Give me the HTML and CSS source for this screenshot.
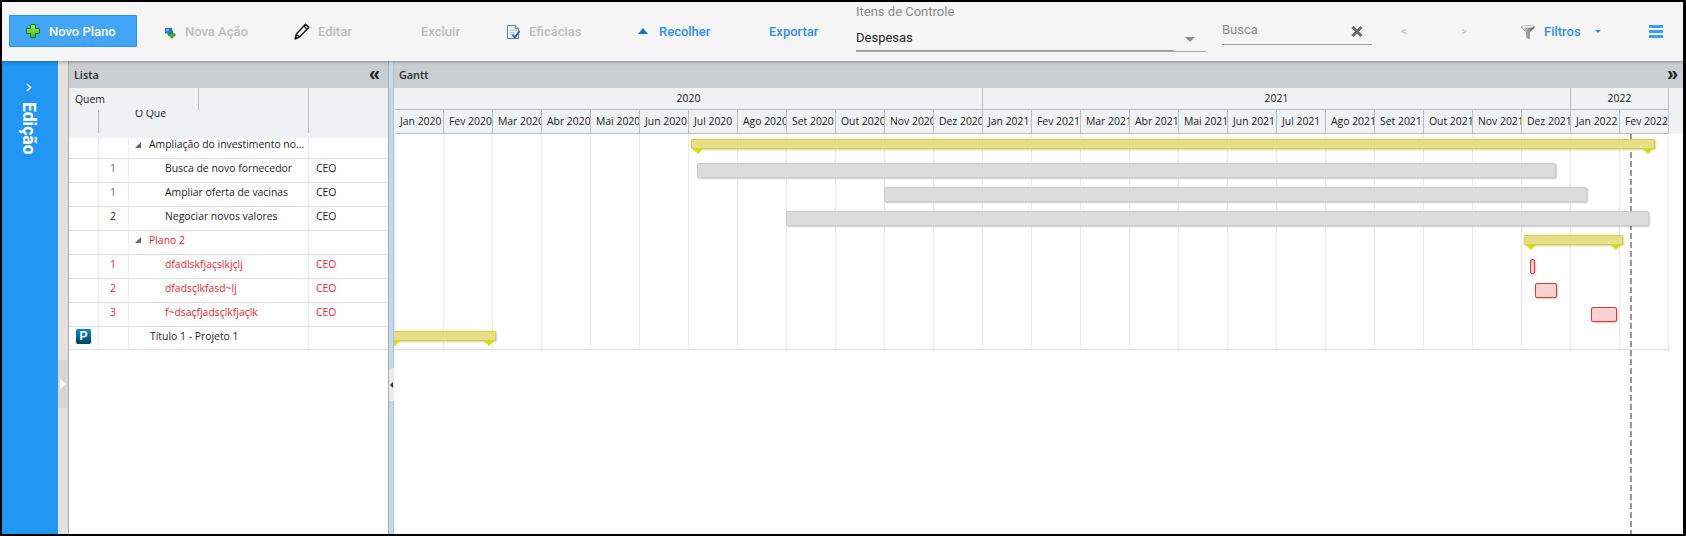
FILE: index.html
```html
<!DOCTYPE html>
<html lang="pt">
<head>
<meta charset="utf-8">
<title>Gantt</title>
<link rel="stylesheet" href="styles.css">
</head>
<body>
<div class="frame">
  <header class="toolbar">
    <button class="primary"><svg class="ic-plus" viewBox="0 0 14 14"><defs><linearGradient id="gp" x1="0" y1="0" x2="0" y2="1"><stop offset="0" stop-color="#a6e86a"/><stop offset="1" stop-color="#3fb52e"/></linearGradient></defs><path d="M4.5.5h5v4h4v5h-4v4h-5v-4h-4v-5h4z" fill="url(#gp)" stroke="#0b7d12"/></svg>Novo Plano</button>
    <div class="tool w-nova muted"><svg class="ic-nova" viewBox="0 0 12 11"><rect x="0" y="0" width="8" height="6" fill="#2f6fd6"/><rect x="1" y="1.500" width="3" height="2" fill="#a8c8f2"/><rect x="2.500" y="3" width="6" height="4" fill="#3a7be0"/><path d="M6.500 4.500h2v2h2.500v2h-2.500v2.500h-2v-2.500h-2.500v-2h2.500z" fill="#46c83a" stroke="#0a6d12" stroke-width=".8"/></svg>Nova Ação</div>
    <div class="tool w-editar muted"><svg class="ic-pencil" viewBox="0 0 16 17"><path d="M11.500 1.200l3.300 3.100-9.300 9.600-4.300 2.100 1-4.700z" fill="#fff" stroke="#1a1a1a" stroke-width="1.500" stroke-linejoin="round"/><path d="M9.800 3l3.300 3.200M2.300 11.300l3.200 2.600" fill="none" stroke="#1a1a1a" stroke-width="1.300"/><path d="M1.200 16l.6-3 2.300 2z" fill="#1a1a1a"/></svg>Editar</div>
    <div class="tool w-excluir muted">Excluir</div>
    <div class="tool w-efic muted"><svg class="ic-doc" viewBox="0 0 13 14"><path d="M.5.500h8l3 3v10h-11z" fill="#f4f6fa" stroke="#6d7c99"/><path d="M8.500.500v3h3" fill="#d9e0ec" stroke="#6d7c99"/><path d="M2.500 5.500h7M2.500 7.500h5M2.500 9.500h3" stroke="#b0bccf"/><path d="M5.500 9.500l2.300 3 4.700-6.500" fill="none" stroke="#1f62c4" stroke-width="2"/></svg>Eficácias</div>
    <div class="tool w-recolher link"><span class="tri-up"></span>Recolher</div>
    <div class="tool w-exportar link">Exportar</div>
    <div class="control">
      <div class="control-label">Itens de Controle</div>
      <div class="control-value"><span>Despesas</span><span class="caret-gray"></span></div>
      <div class="control-line"></div>
    </div>
    <div class="search"><span>Busca</span><svg class="ic-x" viewBox="0 0 12 11"><path d="M1.500 1l9 9M10.500 1l-9 9" stroke="#6b6b6b" stroke-width="3"/></svg></div>
    <div class="nav">&lt;</div>
    <div class="nav">&gt;</div>
    <div class="tool w-filtros link"><svg class="ic-funnel" viewBox="0 0 14 14"><defs><linearGradient id="gf" x1="0" y1="0" x2="1" y2="0"><stop offset="0" stop-color="#e8e8e8"/><stop offset=".5" stop-color="#a0a0a0"/><stop offset="1" stop-color="#4a4a4a"/></linearGradient></defs><path d="M.5 1.500q6.500-2 13 0l-.5 1.500-4.500 4.500v6l-3-.8v-5.200l-4.500-4.500z" fill="url(#gf)" stroke="#777" stroke-width=".5"/><ellipse cx="7" cy="1.800" rx="5.500" ry="1" fill="#f2f2f2"/></svg>Filtros<span class="caret-blue"></span></div>
    <div class="burger"><span></span><span></span><span></span></div>
  </header>

  <main class="workspace">
    <aside class="sidebar">
      <svg class="ic-chev" viewBox="0 0 6 9"><path d="M1 1l3.500 3.500-3.500 3.500" fill="none" stroke="#fff" stroke-width="1.500"/></svg>
      <div class="sidebar-title">Edição</div>
    </aside>
    <div class="strip"><div class="strip-handle"><span class="tri-white"></span></div></div>

    <section class="list">
      <div class="panel-title"><span>Lista</span><span class="dbl">«</span></div>
      <div class="list-head">
        <div class="lh-row1"><div class="lh-cell lh-quem">Quem</div><div class="lh-cell"></div></div>
        <div class="lh-row2"><div class="lh-cell"></div><div class="lh-cell lh-oque">O Que</div></div>
      </div>
      <div class="row first"><div class="c"></div><div class="c"></div><div class="c name"><span class="tree"></span>Ampliação do investimento no...</div><div class="c"></div></div>
      <div class="row"><div class="c"></div><div class="c num one">1</div><div class="c task">Busca de novo fornecedor</div><div class="c who">CEO</div></div>
      <div class="row"><div class="c"></div><div class="c num one">1</div><div class="c task">Ampliar oferta de vacinas</div><div class="c who">CEO</div></div>
      <div class="row"><div class="c"></div><div class="c num">2</div><div class="c task">Negociar novos valores</div><div class="c who">CEO</div></div>
      <div class="row red"><div class="c"></div><div class="c"></div><div class="c name"><span class="tree"></span>Plano 2</div><div class="c"></div></div>
      <div class="row red"><div class="c"></div><div class="c num">1</div><div class="c task">dfadlskfjaçslkjçlj</div><div class="c who">CEO</div></div>
      <div class="row red"><div class="c"></div><div class="c num">2</div><div class="c task">dfadsçlkfasd~lj</div><div class="c who">CEO</div></div>
      <div class="row red"><div class="c"></div><div class="c num">3</div><div class="c task">f~dsaçfjadsçlkfjaçlk</div><div class="c who">CEO</div></div>
      <div class="row last"><div class="c"><span class="badge">P</span></div><div class="c"></div><div class="c name plain">Título 1 - Projeto 1</div><div class="c"></div></div>
    </section>

    <div class="splitter"><div class="split-handle"><span class="tri-dark"></span></div></div>

    <section class="gantt">
      <div class="panel-title gantt-title"><span>Gantt</span><span class="dbl">»</span></div>
      <div class="gantt-head">
        <div class="years"><div>2020</div><div>2021</div><div>2022</div></div>
        <div class="months">
          <div>Jan 2020</div><div>Fev 2020</div><div>Mar 2020</div><div>Abr 2020</div><div>Mai 2020</div><div>Jun 2020</div><div>Jul 2020</div><div>Ago 2020</div><div>Set 2020</div><div>Out 2020</div><div>Nov 2020</div><div>Dez 2020</div>
          <div>Jan 2021</div><div>Fev 2021</div><div>Mar 2021</div><div>Abr 2021</div><div>Mai 2021</div><div>Jun 2021</div><div>Jul 2021</div><div>Ago 2021</div><div>Set 2021</div><div>Out 2021</div><div>Nov 2021</div><div>Dez 2021</div>
          <div>Jan 2022</div><div>Fev 2022</div>
        </div>
      </div>
      <div class="gantt-body">
        <div class="today"></div>
        <div class="timeline">
          <div class="g-row"><div class="bar plan" style="margin-left:297px;width:964px"></div></div>
          <div class="g-row"><div class="bar task-bar" style="margin-left:303px;width:859px"></div></div>
          <div class="g-row"><div class="bar task-bar" style="margin-left:490px;width:703px"></div></div>
          <div class="g-row"><div class="bar task-bar" style="margin-left:392px;width:863px"></div></div>
          <div class="g-row"><div class="bar plan" style="margin-left:1130px;width:99px"></div></div>
          <div class="g-row"><div class="bar late" style="margin-left:1136px;width:5px"></div></div>
          <div class="g-row"><div class="bar late" style="margin-left:1141px;width:22px"></div></div>
          <div class="g-row"><div class="bar late" style="margin-left:1197px;width:26px"></div></div>
          <div class="g-row"><div class="bar plan" style="margin-left:-6px;width:108px"></div></div>
        </div>
      </div>
    </section>
  </main>
</div>
</body>
</html>
```

FILE: styles.css
```css
* { box-sizing: border-box; }
html, body { margin: 0; height: 100%; background: #000; }
body { overflow: hidden; }

.frame {
  margin: 2px 3px 0 2px;
  height: 532px;
  display: flex;
  flex-direction: column;
  background: #fff;
  overflow: hidden;
}

/* Toolbar */
.toolbar {
  height: 59px;
  flex: none;
  display: flex;
  align-items: center;
  padding-left: 7px;
  background: #f5f5f5;
  font: 500 13px Roboto, sans-serif;
  position: relative;
  z-index: 5;
  box-shadow: 0 1px 3px rgba(0, 0, 0, .35);
}
.primary {
  width: 128px;
  height: 32px;
  margin-right: 28px;
  margin-bottom: 1px;
  padding: 0 0 0 16px;
  display: flex;
  align-items: center;
  gap: 9px;
  border: 1px solid #2196f3;
  border-radius: 1px;
  background: #42a5f5;
  color: #fff;
  font: inherit;
}
.ic-plus { width: 14px; height: 14px; flex: none; }
.tool { display: flex; align-items: center; height: 20px; flex: none; }
.muted { color: #bdbdbd; }
.link { color: #2f8ff0; }
.w-nova { width: 129px; gap: 9px; }
.w-editar { width: 127px; gap: 8px; }
.w-excluir { width: 86px; }
.w-efic { width: 131px; gap: 9px; }
.w-recolher { width: 131px; gap: 11px; }
.w-exportar { width: 87px; }
.w-filtros { width: 128px; gap: 9px; }
.ic-nova { width: 11px; height: 10px; margin-top: 3px; flex: none; }
.ic-pencil { width: 16px; height: 17px; flex: none; }
.ic-doc { width: 13px; height: 14px; flex: none; }
.ic-funnel { width: 14px; height: 14px; flex: none; }
.tri-up {
  width: 0; height: 0;
  border-left: 5px solid transparent;
  border-right: 5px solid transparent;
  border-bottom: 6px solid #1e6fd0;
  margin-top: -1px;
}
.caret-blue {
  width: 0; height: 0;
  margin-left: 5px;
  border-left: 3.5px solid transparent;
  border-right: 3.5px solid transparent;
  border-top: 3px solid #2196f3;
}

.control {
  width: 350px;
  height: 59px;
  margin-right: 16px;
  flex: none;
  padding-top: 2px;
  font-weight: 400;
}
.control-label { line-height: 16px; color: #8a8a8a; }
.control-value {
  margin-top: 10px;
  height: 20px;
  line-height: 16px;
  padding-right: 11px;
  display: flex;
  justify-content: space-between;
  color: #222;
}
.caret-gray {
  width: 0; height: 0;
  margin-top: 7px;
  border-left: 5px solid transparent;
  border-right: 5px solid transparent;
  border-top: 5px solid #8c8c8c;
}
.control-line {
  height: 2px;
  background: linear-gradient(to right, #9a9a9a 318px, transparent 318px);
  border-bottom: 1px solid #a8a8a8;
}

.search {
  width: 150px;
  height: 24px;
  margin: 19px 29px 0 0;
  align-self: flex-start;
  padding: 1px 9px 0 0;
  flex: none;
  display: flex;
  justify-content: space-between;
  border-bottom: 1px solid #9e9e9e;
  color: #8a8a8a;
  font-weight: 400;
  line-height: 16px;
}
.ic-x { width: 12px; height: 11px; margin-top: 4px; }
.nav { width: 60px; flex: none; color: #bbb; font-size: 11px; font-weight: 400; }
.burger { width: 14px; height: 13px; display: flex; flex-direction: column; justify-content: space-between; }
.burger span { height: 3px; background: #3aa0f5; }

/* Main area */
.workspace { flex: 1; display: flex; min-height: 0; }
.sidebar {
  width: 56px;
  flex: none;
  background: #2196f3;
  display: flex;
  flex-direction: column;
  align-items: center;
  padding-top: 22px;
  padding-right: 3px;
}
.ic-chev { width: 6px; height: 9px; }
.sidebar-title {
  margin-top: 10px;
  writing-mode: vertical-rl;
  color: #fff;
  font: 700 17.500px/16px Roboto, sans-serif;
}
.strip {
  width: 11px;
  flex: none;
  background: #e2e2e2;
  border-right: 1px solid #aaa;
  position: relative;
}
.strip-handle {
  position: absolute;
  left: 0; right: 0;
  top: 299px;
  height: 48px;
  background: #d6d6d6;
  display: flex;
  align-items: center;
  justify-content: center;
}
.tri-white {
  width: 0; height: 0;
  border-top: 5px solid transparent;
  border-bottom: 5px solid transparent;
  border-left: 6px solid #fff;
}

.list { width: 319px; flex: none; font: 10.400px "Open Sans", sans-serif; color: #1c1c1c; }
.panel-title {
  height: 27px;
  display: flex;
  align-items: center;
  justify-content: space-between;
  padding: 0 8px 0 5px;
  background: #c9ced2;
  color: #2a2a2a;
  font: 600 10.800px "Open Sans", sans-serif;
}
.dbl { font: 700 20px/20px "Liberation Sans", sans-serif; color: #222; margin-top: -3px; }
.list-head { height: 50px; background: #f0f1f3; }
.lh-row1 { height: 22px; display: grid; grid-template-columns: 130px 110px; }
.lh-row2 { height: 23px; display: grid; grid-template-columns: 30px 210px; }
.lh-cell { border-right: 1px solid #b9bec3; overflow: hidden; }
.lh-quem { padding: 3px 0 0 6px; line-height: 16px; }
.lh-oque { padding-left: 36px; line-height: 6px; }

.row {
  height: 24px;
  display: grid;
  grid-template-columns: 30px 30px 180px 1fr;
  border-bottom: 1px solid #ddd;
  line-height: 18px;
}
.row.first { height: 21px; line-height: 12px; }
.row.last { height: 23px; line-height: 18px; }
.row.red { color: #f4242e; }
.c { border-right: 1px solid #eee; white-space: nowrap; overflow: hidden; }
.c:last-child { border-right: 0; }
.num { text-align: center; padding-right: 1px; }
.one { color: #3f6f9f; }
.name { padding-left: 6px; display: flex; align-items: flex-start; }
.task { padding-left: 36px; }
.who { padding-left: 7px; }
.plain { padding-left: 21px; }
.tree {
  width: 0; height: 0;
  margin: 6px 8px 0 0;
  border-left: 6px solid transparent;
  border-bottom: 6px solid #666;
}
.row.first .tree { margin-top: 4px; }
.badge {
  display: block;
  width: 15px;
  height: 15px;
  margin: 2px 0 0 7px;
  border-radius: 2px;
  background: linear-gradient(#0d8cc4, #04405f);
  color: #fff;
  font: 700 12px/15px "Liberation Sans", sans-serif;
  text-align: center;
  box-shadow: 0 0 1px #888;
}

.splitter {
  width: 6px;
  flex: none;
  background: #c9d7e6;
  border-left: 1px solid #9fadbd;
  border-right: 1px solid #a7c4ec;
  position: relative;
}
.split-handle {
  position: absolute;
  left: 0;
  top: 307px;
  width: 5px;
  height: 33px;
  background: #ebebeb;
  border-radius: 3px 0 0 3px;
  display: flex;
  align-items: center;
}
.tri-dark {
  width: 0; height: 0;
  margin-left: 1px;
  border-top: 3px solid transparent;
  border-bottom: 3px solid transparent;
  border-right: 3px solid #333;
}

/* Gantt */
.gantt { flex: 1; min-width: 0; display: flex; flex-direction: column; font: 10.400px "Open Sans", sans-serif; color: #1c1c1c; }
.gantt-title { padding-right: 5px; flex: none; }
.gantt-head { height: 46px; flex: none; background: #f0f1f3; padding-left: 1px; }
.years { height: 22px; width: 1274px; display: grid; grid-template-columns: 12fr 12fr 2fr; }
.years div { border-right: 1px solid #b9bec3; border-bottom: 1px solid #b9bec3; text-align: center; line-height: 20px; }
.months { height: 24px; width: 1274px; display: grid; grid-template-columns: repeat(26, 1fr); }
.months div {
  border-right: 1px solid #b9bec3;
  border-bottom: 1px solid #b9bec3;
  padding-left: 5px;
  line-height: 22px;
  white-space: nowrap;
  overflow: hidden;
}
.gantt-body { flex: 1; position: relative; overflow: hidden; }
.today {
  position: absolute;
  left: 1236px;
  top: 0; bottom: 0;
  width: 2px;
  background: repeating-linear-gradient(to bottom, #999 0 6px, transparent 6px 9px);
}
.timeline {
  width: 1275px;
  height: 216px;
  border-bottom: 1px solid #ddd;
  background-image: repeating-linear-gradient(to right, #eaeaea 0 1px, transparent 1px 49px);
}
.g-row { height: 24px; padding-top: 5px; }
.bar { position: relative; z-index: 1; border-radius: 1px; box-shadow: 1px 1px 2px rgba(0, 0, 0, .2); }
.task-bar { height: 15px; background: #dcdcdc; border: 1px solid #cbcbcb; border-radius: 2px; }
.late { height: 15px; background: #f8d2d0; border: 1px solid #e0382a; border-radius: 2px; }
.plan { height: 10px; background: #e9dd8a; border: 1px solid #d3d91e; }
.plan::before, .plan::after {
  content: "";
  position: absolute;
  top: 9px;
  width: 0; height: 0;
  border-left: 5px solid transparent;
  border-right: 5px solid transparent;
  border-top: 5px solid #d3dc10;
}
.plan::before { left: 1px; }
.plan::after { right: 1px; }
```
